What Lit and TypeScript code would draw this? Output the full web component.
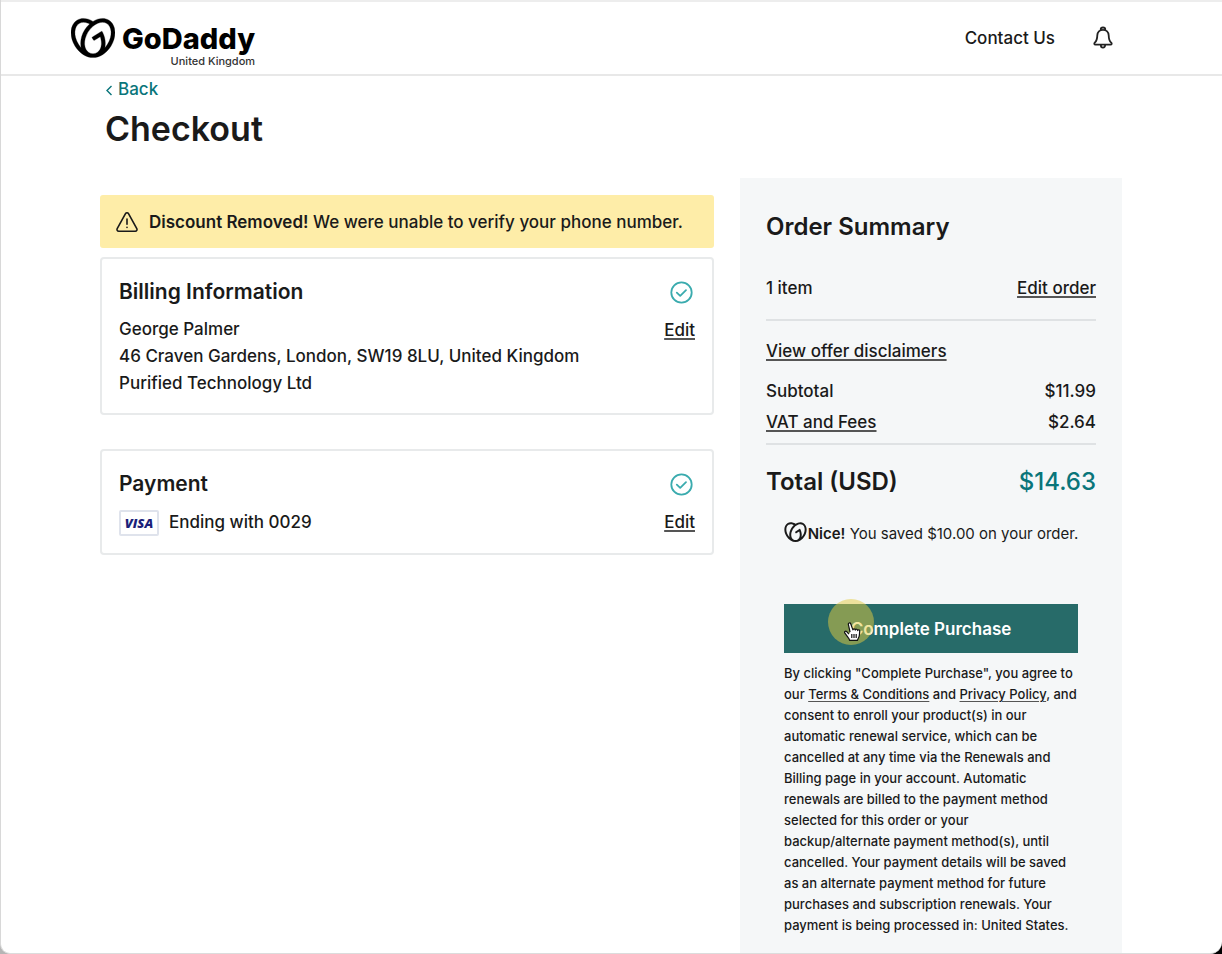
import { LitElement, html, css, svg } from "lit";
import { customElement, property } from "lit/decorators.js";

const base = css`
  * { box-sizing: border-box; }
  h1, h2, p { margin: 0; }
  b { font-weight: 600; }
  a { color: inherit; text-underline-offset: 2px; text-decoration-thickness: 2px; text-decoration-color: #555; }
  svg { display: block; flex: none; }
`;

const heartMark = svg`<path d="M20.702 2.29c-2.494-1.554-5.778-1.187-8.706.654C9.076 1.104 5.79.736 3.3 2.29c-3.941 2.463-4.42 8.806-1.07 14.167 2.47 3.954 6.333 6.269 9.77 6.226 3.439.043 7.301-2.273 9.771-6.226 3.347-5.361 2.872-11.704-1.069-14.167zM4.042 15.328a12.838 12.838 0 01-1.546-3.541 10.12 10.12 0 01-.336-3.338c.15-1.98.956-3.524 2.27-4.345 1.315-.822 3.052-.87 4.903-.137.281.113.556.24.825.382A15.11 15.11 0 007.5 7.54c-2.035 3.255-2.655 6.878-1.945 9.765a13.247 13.247 0 01-1.514-1.98zm17.465-3.541a12.866 12.866 0 01-1.547 3.54 13.25 13.25 0 01-1.513 1.984c.635-2.589.203-5.76-1.353-8.734a.39.39 0 00-.563-.153l-4.852 3.032a.397.397 0 00-.126.546l.712 1.139a.395.395 0 00.547.126l3.145-1.965c.101.306.203.606.28.916.296 1.086.41 2.214.335 3.337-.15 1.982-.956 3.525-2.27 4.347a4.437 4.437 0 01-2.25.65h-.101a4.432 4.432 0 01-2.25-.65c-1.314-.822-2.121-2.365-2.27-4.347-.074-1.123.039-2.251.335-3.337a13.212 13.212 0 014.05-6.482 10.148 10.148 0 012.849-1.765c1.845-.733 3.586-.685 4.9.137 1.316.822 2.122 2.365 2.271 4.345a10.146 10.146 0 01-.33 3.334z"/>`;

@customElement("site-header")
export class SiteHeader extends LitElement {
  static styles = [base, css`
    :host { display: block; }
    .bar { display: flex; align-items: center; justify-content: space-between; height: 76px; padding: 0 109px 0 70px; border-top: 2px solid #ededed; border-bottom: 2px solid #e8e8e8; }
    .logo { display: flex; gap: 7px; color: #000; text-decoration: none; padding-top: 6px; }
    .mark { width: 44px; height: 44px; }
    .names { display: flex; flex-direction: column; align-items: flex-end; padding-top: 6px; }
    .word { font-size: 29px; font-weight: 800; line-height: 33px; }
    .region { font-size: 11px; line-height: 12px; color: #333; }
    .nav { display: flex; align-items: center; gap: 38px; }
    .contact { text-decoration: none; font-size: 17px; }
    .bell { border: 0; padding: 0; background: none; color: #222; }
  `];
  render() {
    return html`<header class="bar">
      <a class="logo" href="#" aria-label="GoDaddy United Kingdom">
        <svg class="mark" viewBox="0 0 24 24" fill="currentColor" stroke="currentColor" stroke-width="0.15">${heartMark}</svg>
        <span class="names"><span class="word">GoDaddy</span><span class="region">United Kingdom</span></span>
      </a>
      <nav class="nav">
        <a class="contact" href="#">Contact Us</a>
        <button class="bell" aria-label="Notifications">
          <svg width="20" height="24" viewBox="0 0 20 24" fill="none" stroke="currentColor" stroke-width="1.8" stroke-linejoin="round">
            <path d="M7.7 3.8a2.3 2.3 0 0 1 4.6 0M10 3.8c-3.400 0-5.600 2.400-5.700 5.600-.1 3.900-.6 5.600-2.500 7.300-.9.9-.6 2 .7 2h15c1.300 0 1.600-1.100.7-2-1.900-1.700-2.400-3.400-2.500-7.300-.1-3.200-2.300-5.600-5.700-5.600zM7.800 19a2.200 2.700 0 0 0 4.400 0"/>
          </svg>
        </button>
      </nav>
    </header>`;
  }
}

@customElement("summary-card")
export class SummaryCard extends LitElement {
  @property() heading = "";
  static styles = [base, css`
    :host { display: block; }
    .card { display: flex; justify-content: space-between; gap: 16px; border: 2px solid #e8eaeb; border-radius: 4px; padding: 18px 17px 16px; }
    .title { font-size: 21px; line-height: 30px; font-weight: 600; margin-bottom: 9px; }
    .side { display: flex; flex-direction: column; align-items: flex-end; }
    .check { margin: 4px 2px 12px 0; }
    .edit { line-height: 28px; }
  `];
  render() {
    return html`<section class="card">
      <div><h2 class="title">${this.heading}</h2><slot></slot></div>
      <div class="side">
        <svg class="check" width="23" height="23" viewBox="0 0 23 23" fill="none" stroke="#3aabae" stroke-width="1.8" stroke-linecap="round" stroke-linejoin="round">
          <circle cx="11.5" cy="11.5" r="10.2"/><path d="M6.8 11.6l3.4 3.3 5.8-5.8"/>
        </svg>
        <a class="edit" href="#">Edit</a>
      </div>
    </section>`;
  }
}

@customElement("order-summary")
export class OrderSummary extends LitElement {
  static styles = [base, css`
    :host { display: block; }
    .panel { height: 100%; background: #f5f7f8; padding: 32px 26px 14px; }
    .title { font-size: 24px; line-height: 34px; font-weight: 600; }
    .row { display: flex; justify-content: space-between; align-items: center; line-height: 31px; }
    .items { margin-top: 29px; padding-bottom: 15px; border-bottom: 2px solid #dfe2e4; }
    .disclaimers { line-height: 30px; margin: 15px 0 10px; }
    .fees { padding-bottom: 5px; border-bottom: 2px solid #dfe2e4; }
    .total { font-size: 24px; line-height: 36px; font-weight: 600; margin-top: 19px; }
    .amount { font-weight: 500; color: #09757a; }
    .saved { display: flex; justify-content: center; align-items: center; gap: 1px; margin-top: 21px; font-size: 15px; line-height: 26px; font-weight: 400; }
    .action { padding: 0 18px; margin-top: 57px; }
    .purchase { position: relative; width: 100%; height: 49px; border: 0; background: #276b69; color: #fff; font: inherit; font-weight: 600; }
    .halo { position: absolute; left: 44px; top: -5px; width: 46px; height: 46px; border-radius: 50%; background: rgba(228, 204, 64, 0.5); }
    .hand { position: absolute; left: 60px; top: 18px; }
    .legal { font-size: 13px; line-height: 21px; margin-top: 10px; }
    .legal a { text-decoration-thickness: 1px; }
  `];
  render() {
    return html`<aside class="panel">
      <h2 class="title">Order Summary</h2>
      <div class="row items"><span>1 item</span><a href="#">Edit order</a></div>
      <p class="disclaimers"><a href="#">View offer disclaimers</a></p>
      <div class="row"><span>Subtotal</span><span>$11.99</span></div>
      <div class="row fees"><a href="#">VAT and Fees</a><span>$2.64</span></div>
      <div class="row total"><span>Total (USD)</span><span class="amount">$14.63</span></div>
      <div class="saved">
        <svg width="23" height="26" viewBox="0 0 24 28" fill="currentColor">${heartMark}</svg>
        <span><b>Nice!</b> You saved $10.00 on your order.</span>
      </div>
      <div class="action">
        <button class="purchase">Complete Purchase
          <span class="halo"></span>
          <svg class="hand" width="17" height="19" viewBox="0 0 17 19" fill="#fff" stroke="#111" stroke-width="1.2" stroke-linejoin="round">
            <path d="M4.9 12.1 2.9 9.8C1.5 8.4-.1 9.7.9 11.1l3.3 4.6c.7 1.1 1.3 1.5 1.3 2.6h8c0-1.4 1.7-2.6 1.9-5.3l.3-4c.1-1.5-1.7-1.7-2-.4-.2-1.7-2.1-1.8-2.4-.5-.3-1.5-2.1-1.5-2.4-.2L6.8 2C6.2.3 4 .8 4.4 2.6l1.7 7.6"/>
            <path d="M7.8 12v4M10 12v4M12.2 12v4"/>
          </svg>
        </button>
        <p class="legal">By clicking "Complete Purchase", you agree to our <a href="#">Terms &amp; Conditions</a> and <a href="#">Privacy Policy</a>, and consent to enroll your product(s) in our automatic renewal service, which can be cancelled at any time via the Renewals and Billing page in your account. Automatic renewals are billed to the payment method selected for this order or your backup/alternate payment method(s), until cancelled. Your payment details will be saved as an alternate payment method for future purchases and subscription renewals. Your payment is being processed in: United States.</p>
      </div>
    </aside>`;
  }
}

@customElement("app-root")
export class AppRoot extends LitElement {
  static styles = [base, css`
    :host { display: block; font-family: Inter, "Liberation Sans", sans-serif; font-size: 17px; font-weight: 500; color: #1a1a1a; background: linear-gradient(90deg, #b5b5b5 50%, #000 50%); }
    .page { display: flex; flex-direction: column; min-height: 100vh; background: #fff; border-left: 1px solid #d8d8d8; border-bottom: 1px solid #dcdcdc; border-radius: 0 0 12px 10px; }
    .intro { padding: 0 104px; }
    .back { display: inline-flex; align-items: center; gap: 5px; color: #09757a; line-height: 27px; text-decoration: none; }
    .title { font-size: 34px; line-height: 42px; font-weight: 600; margin-top: 5px; }
    .columns { flex: 1; display: grid; grid-template-columns: minmax(0, 614fr) minmax(0, 382fr); gap: 26px; padding: 28px 100px 0 99px; }
    .left { padding-top: 17px; }
    .alert { display: flex; align-items: center; gap: 11px; height: 53px; padding: 0 16px; background: #feeda8; border-radius: 3px; margin-bottom: 9px; }
    .billing { margin-bottom: 34px; }
    .lines { line-height: 27px; }
    .method { display: flex; align-items: center; gap: 10px; line-height: 29px; }
    .visa { width: 40px; height: 26px; border: 2px solid #dfe3ec; border-radius: 2px; background: #fff; color: #1b1f7a; font: italic 800 13px/22px "Open Sans", sans-serif; text-align: center; }
  `];
  render() {
    return html`<div class="page">
      <site-header></site-header>
      <div class="intro">
        <a class="back" href="#"><svg width="8" height="12" viewBox="0 0 8 12" fill="none" stroke="currentColor" stroke-width="1.4"><path d="M6.500 2L2 6.500l4.500 4.500"/></svg>Back</a>
        <h1 class="title">Checkout</h1>
      </div>
      <main class="columns">
        <div class="left">
          <div class="alert" role="alert">
            <svg width="22" height="22" viewBox="0 0 22 22" fill="none" stroke="currentColor" stroke-width="1.6" stroke-linecap="round" stroke-linejoin="round"><path d="M9.500 2.600a1.700 1.700 0 0 1 3 0l8.300 15.100c.6 1.200-.1 2.500-1.500 2.500H2.700c-1.400 0-2.100-1.300-1.500-2.500zM11 8v5.200M11 16.300v.2"/></svg>
            <span><b>Discount Removed!</b> We were unable to verify your phone number.</span>
          </div>
          <summary-card class="billing" heading="Billing Information">
            <div class="lines">George Palmer<br>46 Craven Gardens, London, SW19 8LU, United Kingdom<br>Purified Technology Ltd</div>
          </summary-card>
          <summary-card heading="Payment">
            <div class="method"><span class="visa">VISA</span><span>Ending with 0029</span></div>
          </summary-card>
        </div>
        <order-summary></order-summary>
      </main>
    </div>`;
  }
}
